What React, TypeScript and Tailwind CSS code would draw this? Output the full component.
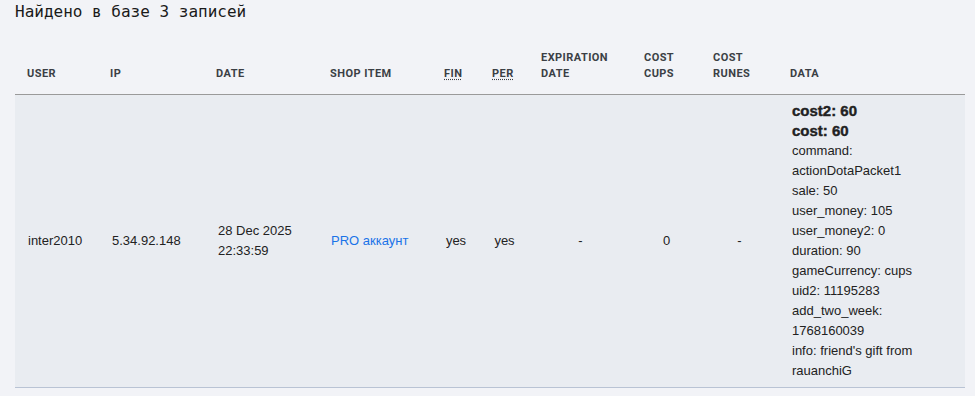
import React from "react";

type Purchase = {
  user: string;
  ip: string;
  date: string;
  time: string;
  item: string;
  fin: string;
  per: string;
  expiration: string;
  costCups: string;
  costRunes: string;
  data: { key: string; value: string; strong?: boolean }[];
};

const purchases: Purchase[] = [
  {
    user: "inter2010",
    ip: "5.34.92.148",
    date: "28 Dec 2025",
    time: "22:33:59",
    item: "PRO аккаунт",
    fin: "yes",
    per: "yes",
    expiration: "-",
    costCups: "0",
    costRunes: "-",
    data: [
      { key: "cost2", value: "60", strong: true },
      { key: "cost", value: "60", strong: true },
      { key: "command", value: "actionDotaPacket1" },
      { key: "sale", value: "50" },
      { key: "user_money", value: "105" },
      { key: "user_money2", value: "0" },
      { key: "duration", value: "90" },
      { key: "gameCurrency", value: "cups" },
      { key: "uid2", value: "11195283" },
      { key: "add_two_week", value: "1768160039" },
      { key: "info", value: "friend's gift from rauanchiG" },
    ],
  },
];

const th =
  "px-3 pt-[10px] pb-[12px] text-left align-bottom text-[11px] leading-4 font-bold uppercase tracking-[0.04em] text-[#3b3f45] font-['Roboto',sans-serif]";
const td = "px-3 align-middle";

export default function App() {
  return (
    <div className="min-h-screen bg-[#f2f3f7] px-[15px] font-['Liberation_Sans',Arial,sans-serif] text-[13px] leading-5 text-[#222]">
      <h1 className="font-['DejaVu_Sans_Mono',monospace] text-base leading-6 text-[#1a1a1a]">
        Найдено в базе 3 записей
      </h1>

      <table className="mt-4 w-[950px] table-fixed border-collapse">
        <colgroup>
          <col className="w-[83px]" />
          <col className="w-[106px]" />
          <col className="w-[114px]" />
          <col className="w-[114px]" />
          <col className="w-[48px]" />
          <col className="w-[49px]" />
          <col className="w-[103px]" />
          <col className="w-[69px]" />
          <col className="w-[77px]" />
          <col />
        </colgroup>
        <thead>
          <tr className="border-b border-[#9a9a9a]">
            <th className={th}>User</th>
            <th className={th}>IP</th>
            <th className={th}>Date</th>
            <th className={th}>Shop item</th>
            <th className={th}>
              <abbr title="Finished" className="underline decoration-dotted underline-offset-2">
                Fin
              </abbr>
            </th>
            <th className={th}>
              <abbr title="Permanent" className="underline decoration-dotted underline-offset-2">
                Per
              </abbr>
            </th>
            <th className={th}>
              Expiration
              <br />
              date
            </th>
            <th className={th}>
              Cost
              <br />
              cups
            </th>
            <th className={th}>
              Cost
              <br />
              runes
            </th>
            <th className={th}>Data</th>
          </tr>
        </thead>
        <tbody>
          {purchases.map((p) => (
            <tr key={p.user + p.time} className="border-b border-[#b9c3d4] bg-[#e9ecf1]">
              <td className={`${td} pl-[13px]`}>{p.user}</td>
              <td className={`${td} pl-[14px]`}>{p.ip}</td>
              <td className={`${td} pl-[14px]`}>
                {p.date}
                <br />
                {p.time}
              </td>
              <td className={`${td} pl-[13px]`}>
                <a href="#" className="text-[#1a73e8]">
                  {p.item}
                </a>
              </td>
              <td className={`${td} text-center`}>{p.fin}</td>
              <td className={`${td} text-center`}>{p.per}</td>
              <td className={`${td} text-center`}>{p.expiration}</td>
              <td className={`${td} text-center`}>{p.costCups}</td>
              <td className={`${td} text-center`}>{p.costRunes}</td>
              <td className="px-3 pt-[6px] pb-[6px] align-middle">
                <div className="max-w-[150px] pl-[2px]">
                  {p.data.map((d) =>
                    d.strong ? (
                      <div key={d.key} className="text-[15px] font-bold [-webkit-text-stroke:0.4px]">
                        {d.key}: {d.value}
                      </div>
                    ) : (
                      <div key={d.key}>
                        {d.key}: {d.value}
                      </div>
                    ),
                  )}
                </div>
              </td>
            </tr>
          ))}
        </tbody>
      </table>
    </div>
  );
}
